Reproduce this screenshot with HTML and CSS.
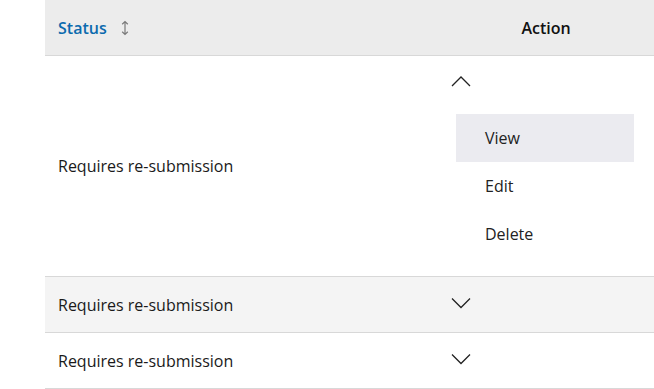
FILE: index.html
```html
<!DOCTYPE html>
<html lang="en">
<head>
<meta charset="utf-8">
<title>Status table</title>
<link rel="stylesheet" href="styles.css">
</head>
<body>
<div class="table">
  <div class="row head">
    <div class="cell status-head">
      <span class="status-label">Status</span>
      <svg class="sort" width="10" height="16" viewBox="0 0 10 16" aria-hidden="true">
        <path d="M5 1.5V14.5M2.2 4.2L5 1.5L7.8 4.2M2.2 11.8L5 14.5L7.8 11.8" fill="none" stroke="#7a7a7a" stroke-width="1.2"/>
      </svg>
    </div>
    <div class="cell action-head">Action</div>
  </div>

  <div class="row open">
    <div class="cell text">Requires re-submission</div>
    <div class="cell action">
      <button class="toggle" aria-label="Collapse">
        <svg width="20" height="12" viewBox="0 0 20 12"><path d="M1 11L10 2L19 11" fill="none" stroke="#222" stroke-width="1.3"/></svg>
      </button>
      <ul class="menu">
        <li class="item active">View</li>
        <li class="item">Edit</li>
        <li class="item">Delete</li>
      </ul>
    </div>
  </div>

  <div class="row shaded">
    <div class="cell text">Requires re-submission</div>
    <div class="cell action">
      <button class="toggle down" aria-label="Expand">
        <svg width="20" height="12" viewBox="0 0 20 12"><path d="M1 1.5L10 10.5L19 1.5" fill="none" stroke="#222" stroke-width="1.3"/></svg>
      </button>
    </div>
  </div>

  <div class="row">
    <div class="cell text">Requires re-submission</div>
    <div class="cell action">
      <button class="toggle down" aria-label="Expand">
        <svg width="20" height="12" viewBox="0 0 20 12"><path d="M1 1.5L10 10.5L19 1.5" fill="none" stroke="#222" stroke-width="1.3"/></svg>
      </button>
    </div>
  </div>
</div>
</body>
</html>
```

FILE: styles.css
```css
html, body {
  margin: 0;
  padding: 0;
  background: #fff;
}
body {
  font-family: "Open Sans", "Noto Sans", sans-serif;
  font-size: 16px;
  color: #1a1a1a;
  padding-left: 45px;
}
.table {
  width: 609px;
}
.row {
  display: grid;
  grid-template-columns: 393px 216px;
  border-bottom: 1px solid #d8d8d8;
}
.head {
  background: #ececec;
  height: 55px;
}
.shaded {
  background: #f4f4f4;
}
.cell {
  display: flex;
  align-items: center;
}
.status-head {
  padding-left: 13px;
  gap: 13px;
}
.status-label {
  color: #0b6aae;
  font-weight: 600;
}
.sort {
  display: block;
  margin-top: 1px;
}
.action-head {
  justify-content: center;
  font-weight: 600;
  color: #111;
}
.text {
  padding-left: 13px;
  height: 55px;
}
.open .text {
  height: auto;
}
.action {
  padding-left: 13px;
  height: 55px;
}
.open .action {
  height: auto;
  flex-direction: column;
  align-items: flex-start;
  padding-top: 10px;
  padding-bottom: 18px;
}
.toggle {
  border: 0;
  background: none;
  padding: 0;
  width: 20px;
  height: 30px;
  display: flex;
  align-items: center;
  justify-content: center;
  cursor: pointer;
}
.toggle.down {
  margin-top: -4px;
}
.open .toggle {
  margin-bottom: 18px;
}
.menu {
  list-style: none;
  margin: 0 0 0 5px;
  padding: 0;
  width: 178px;
}
.item {
  height: 48px;
  display: flex;
  align-items: center;
  padding-left: 29px;
  color: #222;
}
.item.active {
  background: #ebebf0;
}
```
